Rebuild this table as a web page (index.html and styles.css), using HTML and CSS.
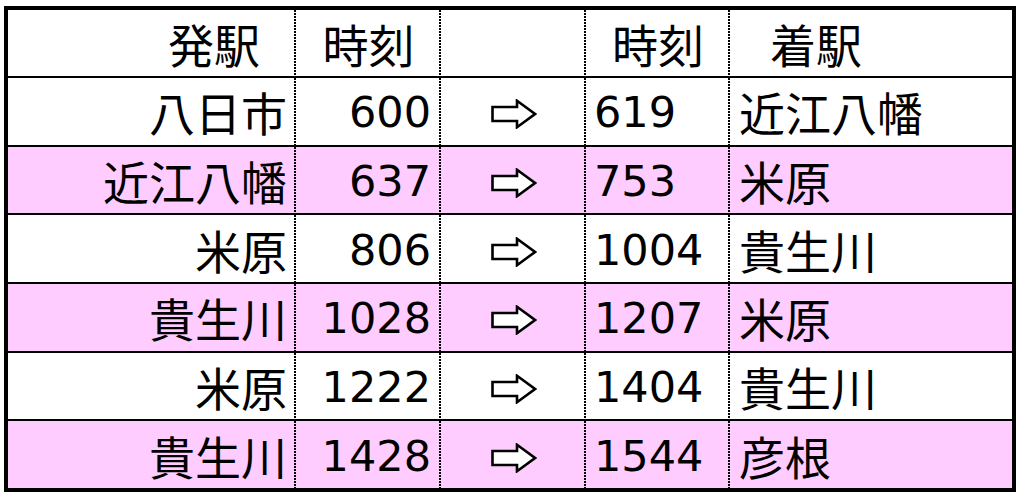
FILE: index.html
```html
<!DOCTYPE html>
<html lang="ja">
<head>
<meta charset="utf-8">
<title>時刻表</title>
<link rel="stylesheet" href="styles.css">
</head>
<body>
<div class="page">
  <div class="table">
    <div class="row head">
      <div class="c c1">発駅</div>
      <div class="c c2">時刻</div>
      <div class="c c3"></div>
      <div class="c c4">時刻</div>
      <div class="c c5">着駅</div>
    </div>
    <div class="row">
      <div class="c c1"><span class="jp">八日市</span></div>
      <div class="c c2">600</div>
      <div class="c c3"><svg class="arrow" viewBox="0 0 46 30"><path d="M1.5 8 H26 V1.8 L44 15 L26 28.2 V22 H1.5 Z"/></svg></div>
      <div class="c c4">619</div>
      <div class="c c5"><span class="jp">近江八幡</span></div>
    </div>
    <div class="row pink">
      <div class="c c1"><span class="jp">近江八幡</span></div>
      <div class="c c2">637</div>
      <div class="c c3"><svg class="arrow" viewBox="0 0 46 30"><path d="M1.5 8 H26 V1.8 L44 15 L26 28.2 V22 H1.5 Z"/></svg></div>
      <div class="c c4">753</div>
      <div class="c c5"><span class="jp">米原</span></div>
    </div>
    <div class="row">
      <div class="c c1"><span class="jp">米原</span></div>
      <div class="c c2">806</div>
      <div class="c c3"><svg class="arrow" viewBox="0 0 46 30"><path d="M1.5 8 H26 V1.8 L44 15 L26 28.2 V22 H1.5 Z"/></svg></div>
      <div class="c c4">1004</div>
      <div class="c c5"><span class="jp">貴生川</span></div>
    </div>
    <div class="row pink">
      <div class="c c1"><span class="jp">貴生川</span></div>
      <div class="c c2">1028</div>
      <div class="c c3"><svg class="arrow" viewBox="0 0 46 30"><path d="M1.5 8 H26 V1.8 L44 15 L26 28.2 V22 H1.5 Z"/></svg></div>
      <div class="c c4">1207</div>
      <div class="c c5"><span class="jp">米原</span></div>
    </div>
    <div class="row">
      <div class="c c1"><span class="jp">米原</span></div>
      <div class="c c2">1222</div>
      <div class="c c3"><svg class="arrow" viewBox="0 0 46 30"><path d="M1.5 8 H26 V1.8 L44 15 L26 28.2 V22 H1.5 Z"/></svg></div>
      <div class="c c4">1404</div>
      <div class="c c5"><span class="jp">貴生川</span></div>
    </div>
    <div class="row pink">
      <div class="c c1"><span class="jp">貴生川</span></div>
      <div class="c c2">1428</div>
      <div class="c c3"><svg class="arrow" viewBox="0 0 46 30"><path d="M1.5 8 H26 V1.8 L44 15 L26 28.2 V22 H1.5 Z"/></svg></div>
      <div class="c c4">1544</div>
      <div class="c c5"><span class="jp">彦根</span></div>
    </div>
  </div>
</div>
</body>
</html>
```

FILE: styles.css
```css
html, body {
  margin: 0;
  padding: 0;
  background: #ffffff;
}

.page {
  padding: 6px 0 0 4px;
}

.table {
  box-sizing: border-box;
  width: 1012px;
  height: 486px;
  border: 4px solid #000;
  display: grid;
  grid-template-rows: 66px repeat(6, 1fr);
  font-family: "DejaVu Sans", "Noto Sans CJK JP", sans-serif;
  font-size: 43px;
  color: #000;
  background: #fff;
}

.row {
  display: grid;
  grid-template-columns: 288px 145px 145px 144px 282px;
  border-top: 2px solid #000;
}

.row.head {
  border-top: none;
}

.row.pink {
  background: #ffccff;
}

.c {
  box-sizing: border-box;
  display: flex;
  align-items: center;
  line-height: 1;
  white-space: nowrap;
  background-image: linear-gradient(to bottom, #000 0, #000 2px, transparent 2px, transparent 3px);
  background-size: 2px 3px;
  background-repeat: repeat-y;
  background-position: right top;
}

.c2,
.c4 {
  padding-top: 3px;
}

.c5 {
  background-image: none;
}

.jp {
  font-family: "Noto Sans CJK JP", sans-serif;
  font-size: 46px;
}

.c1 {
  justify-content: flex-end;
  padding-right: 9px;
}

.c2 {
  justify-content: flex-end;
  padding-right: 10px;
}

.c3 {
  justify-content: center;
}

.c4 {
  justify-content: flex-start;
  padding-left: 8px;
}

.c5 {
  justify-content: flex-start;
  padding-left: 9px;
}

.head .c {
  font-family: "Noto Sans CJK JP", sans-serif;
  font-size: 46px;
  padding-top: 0;
}

.head .c1 {
  padding-right: 36px;
}

.head .c2,
.head .c4 {
  justify-content: center;
  padding-left: 0;
  padding-right: 0;
}

.head .c5 {
  padding-left: 40px;
}

.arrow {
  width: 46px;
  height: 30px;
  margin-top: 6px;
}

.arrow path {
  fill: #fff;
  stroke: #000;
  stroke-width: 2.6;
  stroke-linejoin: miter;
}
```
